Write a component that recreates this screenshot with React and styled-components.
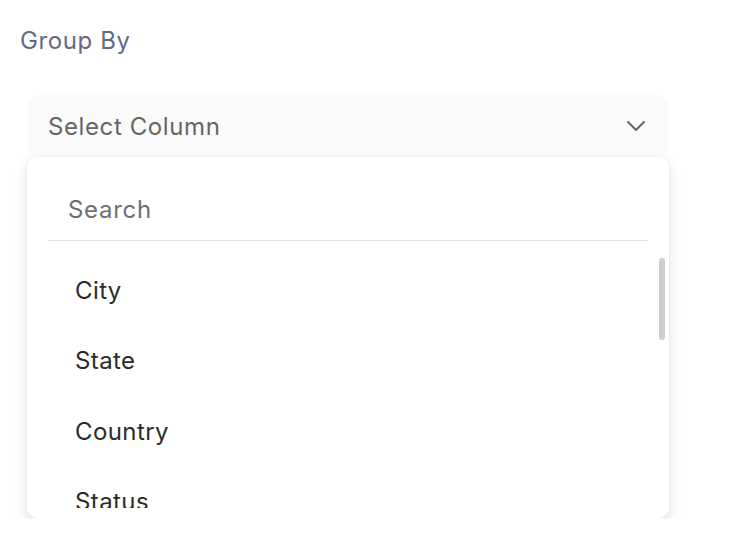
import React from "react";
import styled, { createGlobalStyle } from "styled-components";

const Global = createGlobalStyle`
  html, body { margin: 0; padding: 0; background: #ffffff; }
  body { font-family: Inter, "Noto Sans", sans-serif; -webkit-font-smoothing: antialiased; }
`;

const Page = styled.div`
  padding: 26px 0 0 20px;
  width: 730px;
  box-sizing: border-box;
`;

const Label = styled.div`
  font-size: 24px;
  line-height: 30px;
  color: #5f6b85;
  letter-spacing: 0.6px;
`;

const Field = styled.div`
  margin: 39px 0 0 8px;
  width: 640px;
  display: flex;
  flex-direction: column;
`;

const Trigger = styled.div`
  height: 62px;
  box-sizing: border-box;
  background: #fafafa;
  border-radius: 10px;
  display: flex;
  align-items: center;
  justify-content: space-between;
  padding: 0 22px 0 20px;
  font-size: 24px;
  letter-spacing: 0.6px;
  color: #666666;
`;

const Panel = styled.div`
  position: relative;
  margin-left: -1px;
  width: 642px;
  height: 361px;
  box-sizing: border-box;
  background: #ffffff;
  border-radius: 10px;
  box-shadow: 0 6px 14px rgba(0, 0, 0, 0.13), 0 0 2px rgba(0, 0, 0, 0.07);
  padding: 21px 21px 10px 21px;
  display: flex;
  flex-direction: column;
`;

const SearchInput = styled.input`
  border: none;
  outline: none;
  border-bottom: 1px solid #e2e2e2;
  height: 63px;
  padding: 0 0 0 20px;
  font-family: inherit;
  font-size: 24px;
  letter-spacing: 0.7px;
  color: #333;
  background: transparent;
  box-sizing: border-box;
  &::placeholder { color: #6f6f6f; }
`;

const List = styled.div`
  flex: 1;
  overflow: hidden;
  padding-top: 14px;
`;

const Item = styled.div`
  height: 70.5px;
  display: flex;
  align-items: center;
  padding-left: 27px;
  font-size: 24px;
  letter-spacing: 0.4px;
  color: #2b2b2b;
`;

const Thumb = styled.div`
  position: absolute;
  right: 4px;
  top: 101px;
  width: 6px;
  height: 82px;
  border-radius: 3px;
  background: #cdcdcd;
`;

const Chevron = () => (
  <svg width="20" height="12" viewBox="0 0 20 12" fill="none">
    <path d="M2 2 L10 10 L18 2" stroke="#666" strokeWidth="2" strokeLinecap="round" strokeLinejoin="round" />
  </svg>
);

const items = ["City", "State", "Country", "Status"];

export default function App() {
  return (
    <Page>
      <Global />
      <Label>Group By</Label>
      <Field>
        <Trigger>
          <span>Select Column</span>
          <Chevron />
        </Trigger>
        <Panel>
          <SearchInput placeholder="Search" />
          <List>
            {items.map((it) => (
              <Item key={it}>{it}</Item>
            ))}
          </List>
          <Thumb />
        </Panel>
      </Field>
    </Page>
  );
}
